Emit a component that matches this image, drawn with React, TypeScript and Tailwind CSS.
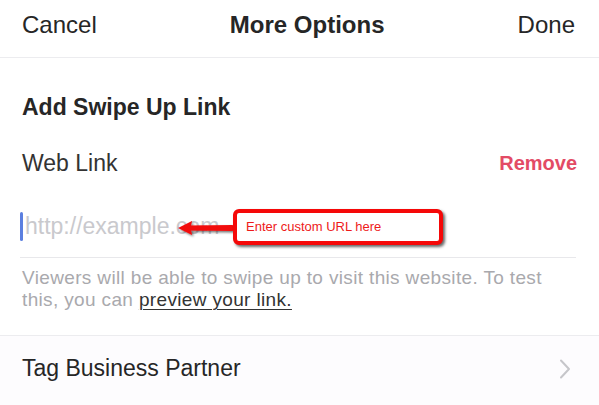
import React from "react";

const font = { fontFamily: '"Liberation Sans", Arial, sans-serif' };

const Arrow = () => (
    <svg
        className="absolute left-[150px] top-[4px]"
        width="70"
        height="28"
        viewBox="0 0 70 28"
    >
        <defs>
            <filter id="arrowShadow" x="-20%" y="-40%" width="140%" height="180%">
                <feDropShadow dx="1.5" dy="1.5" stdDeviation="1" floodColor="#000" floodOpacity="0.55" />
            </filter>
        </defs>
        <g filter="url(#arrowShadow)" fill="#f20a0a">
            <polygon points="8,13 22,6 21,10.5 62,10 62,16 21,15.5 22,20" />
            <circle cx="62" cy="13" r="3" />
        </g>
    </svg>
);

export default function App() {
    return (
        <div className="w-[599px] h-[405px] bg-white flex flex-col overflow-hidden" style={font}>
            {/* Top bar */}
            <div className="h-[58px] shrink-0 flex items-center justify-between pl-[22px] pr-[24px] pb-[7px] border-b border-[#ececef] text-[24px] text-[#262626]">
                <span>Cancel</span>
                <span className="font-bold">More Options</span>
                <span>Done</span>
            </div>

            <div className="px-[22px] pr-[22px]">
                <div className="mt-[35px] text-[23px] leading-[28px] font-bold text-[#262626]">
                    Add Swipe Up Link
                </div>

                <div className="mt-[28px] flex items-center justify-between h-[28px]">
                    <span className="text-[23px] text-[#333]">Web Link</span>
                    <span className="text-[20px] font-bold text-[#e34b65]">Remove</span>
                </div>
            </div>

            {/* URL input */}
            <div className="relative mt-[34px] ml-[20px] mr-[23px] h-[30px] flex items-center">
                <div className="w-[3px] h-[29px] bg-[#5b7fe0] rounded-sm" />
                <span className="ml-[2px] text-[23px] text-[#c9c9cd]">http://example.com</span>
                <Arrow />
                <div className="absolute left-[213px] top-[-2px] w-[210px] h-[36px] border-[4px] border-[#f50808] rounded-[6px] bg-white shadow-[2px_2px_3px_rgba(0,0,0,0.6)] flex items-center pl-[9px]">
                    <span className="text-[13px] text-[#ee1a1a]">Enter custom URL here</span>
                </div>
            </div>
            <div className="mt-[16px] ml-[20px] mr-[23px] h-px bg-[#e8e8eb]" />

            <p className="mt-[9px] ml-[22px] mr-[23px] text-[19px] leading-[22px] tracking-[0.35px] text-[#a9a9ad]">
                Viewers will be able to swipe up to visit this website. To test this, you can{" "}
                <span className="text-[#333] underline underline-offset-[3px] decoration-1">preview your link.</span>
            </p>

            {/* Tag row */}
            <div className="mt-[24px] flex-1 border-t border-[#ececef] bg-[#fdfcfe] flex items-center justify-between pl-[22px] pr-[28px] pb-[4px]">
                <span className="text-[23px] text-[#262626]">Tag Business Partner</span>
                <svg width="12" height="20" viewBox="0 0 12 20" fill="none">
                    <path d="M2 1.5 L10 10 L2 18.5" stroke="#c6c6ca" strokeWidth="2" strokeLinecap="round" strokeLinejoin="round" />
                </svg>
            </div>
        </div>
    );
}
